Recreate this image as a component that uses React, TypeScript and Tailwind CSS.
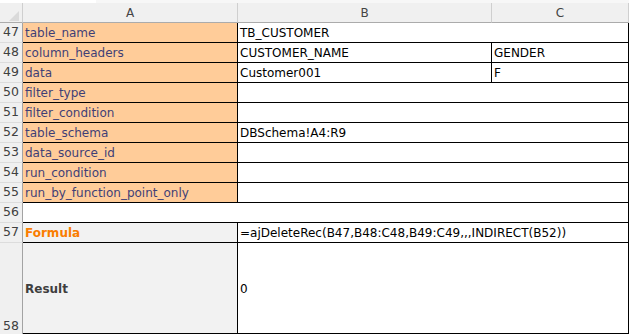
import React from "react";

type Row = {
  n: number;
  key: string;
  b?: string;
  c?: string;
  split?: boolean;
};

const params: Row[] = [
  { n: 47, key: "table_name", b: "TB_CUSTOMER" },
  { n: 48, key: "column_headers", b: "CUSTOMER_NAME", c: "GENDER", split: true },
  { n: 49, key: "data", b: "Customer001", c: "F", split: true },
  { n: 50, key: "filter_type" },
  { n: 51, key: "filter_condition" },
  { n: 52, key: "table_schema", b: "DBSchema!A4:R9" },
  { n: 53, key: "data_source_id" },
  { n: 54, key: "run_condition" },
  { n: 55, key: "run_by_function_point_only" },
];

const cols = "grid grid-cols-[23px_215px_254px_137px]";
const gutter =
  "flex items-center justify-center border-r border-b border-r-[#a3a3a3] border-b-[#dcdcdc] bg-[#f0f0f0] text-[12.5px] text-[#404040]";
const cell = "flex items-center border-r border-b border-black pl-[2px] pt-[1px] whitespace-nowrap overflow-hidden";

export default function App() {
  return (
    <div className="h-[336px] w-[629px] overflow-hidden bg-white font-['DejaVu_Sans',sans-serif] text-[12px] leading-none text-black">
      {/* strip under the formula bar */}
      <div className="flex h-[3px]">
        <div className="w-[96px] bg-white" />
        <div className="flex-1 bg-[#f7f7f7]" />
      </div>

      {/* column letters */}
      <div className={`${cols} h-[20px] bg-[#f0f0f0] text-[#444]`}>
        <div className="relative border-r border-b border-r-[#cfcfcf] border-b-[#ababab]">
          <svg className="absolute left-[9px] top-[8px]" width="10" height="10" viewBox="0 0 10 10">
            <polygon points="10,0 10,10 0,10" fill="#dadada" />
          </svg>
        </div>
        <div className="flex items-center justify-center border-r border-b border-r-[#cfcfcf] border-b-[#ababab]">A</div>
        <div className="flex items-center justify-center border-r border-b border-r-[#cfcfcf] border-b-[#ababab]">B</div>
        <div className="flex items-center justify-center border-r border-b border-r-[#cfcfcf] border-b-[#ababab]">C</div>
      </div>

      {params.map((r) => (
        <div key={r.n} className={`${cols} h-[20px]`}>
          <div className={gutter}>{r.n}</div>
          <div className={`${cell} bg-[#ffcc99] text-[#3f3f76]`}>{r.key}</div>
          {r.split ? (
            <>
              <div className={cell}>{r.b}</div>
              <div className={cell}>{r.c}</div>
            </>
          ) : (
            <div className={`${cell} col-span-2`}>{r.b}</div>
          )}
        </div>
      ))}

      <div className={`${cols} h-[20px]`}>
        <div className={gutter}>56</div>
        <div className={`${cell} col-span-3`} />
      </div>

      <div className={`${cols} h-[20px]`}>
        <div className={gutter}>57</div>
        <div className={`${cell} bg-[#f2f2f2] font-bold text-[#fa7d00]`}>Formula</div>
        <div className={`${cell} col-span-2`}>=ajDeleteRec(B47,B48:C48,B49:C49,,,INDIRECT(B52))</div>
      </div>

      <div className={`${cols} h-[91px]`}>
        <div className="flex items-end justify-center border-r border-r-[#a3a3a3] bg-[#f0f0f0] pb-[2px] text-[12.5px] text-[#404040]">58</div>
        <div className={`${cell} bg-[#f2f2f2] font-bold text-[#3f3f3f]`}>Result</div>
        <div className={`${cell} col-span-2`}>0</div>
      </div>
    </div>
  );
}
